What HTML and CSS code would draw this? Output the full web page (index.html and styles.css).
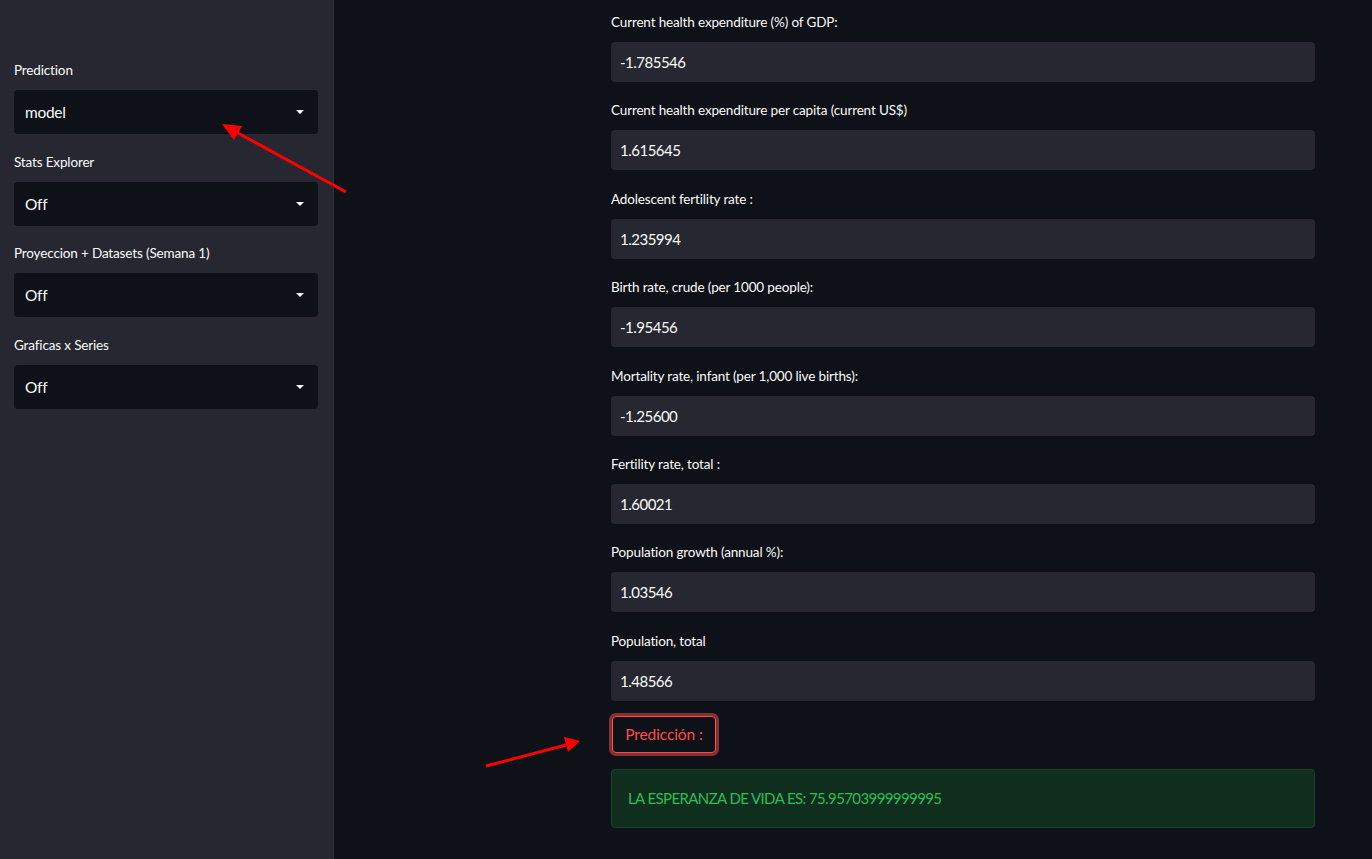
FILE: index.html
```html
<!DOCTYPE html>
<html lang="es">
<head>
<meta charset="utf-8">
<title>Prediction</title>
<link rel="stylesheet" href="styles.css">
</head>
<body>
<div class="app">
  <aside class="sidebar">
    <div class="group">
      <div class="slabel">Prediction</div>
      <div class="select"><span>model</span><span class="caret"></span></div>
    </div>
    <div class="group">
      <div class="slabel">Stats Explorer</div>
      <div class="select"><span>Off</span><span class="caret"></span></div>
    </div>
    <div class="group">
      <div class="slabel">Proyeccion + Datasets (Semana 1)</div>
      <div class="select"><span>Off</span><span class="caret"></span></div>
    </div>
    <div class="group">
      <div class="slabel">Graficas x Series</div>
      <div class="select"><span>Off</span><span class="caret"></span></div>
    </div>
  </aside>
  <main class="main">
    <div class="content">
      <div class="field"><div class="flabel">Current health expenditure (%) of GDP:</div><div class="input">-1.785546</div></div>
      <div class="field"><div class="flabel">Current health expenditure per capita (current US$)</div><div class="input">1.615645</div></div>
      <div class="field"><div class="flabel">Adolescent fertility rate :</div><div class="input">1.235994</div></div>
      <div class="field"><div class="flabel">Birth rate, crude (per 1000 people):</div><div class="input">-1.95456</div></div>
      <div class="field"><div class="flabel">Mortality rate, infant (per 1,000 live births):</div><div class="input">-1.25600</div></div>
      <div class="field"><div class="flabel">Fertility rate, total :</div><div class="input">1.60021</div></div>
      <div class="field"><div class="flabel">Population growth (annual %):</div><div class="input">1.03546</div></div>
      <div class="field"><div class="flabel">Population, total</div><div class="input">1.48566</div></div>
      <div class="btnrow"><button class="btn">Predicción :</button></div>
      <div class="success">LA ESPERANZA DE VIDA ES: 75.95703999999995</div>
    </div>
  </main>
</div>
<svg class="arrows" width="1372" height="859" viewBox="0 0 1372 859">
  <line x1="346" y1="192" x2="236" y2="132" stroke="#ff0000" stroke-width="3"/>
  <polygon points="222,124 242,126 234,140" fill="#ff0000"/>
  <line x1="486" y1="766" x2="566" y2="745" stroke="#ff0000" stroke-width="3"/>
  <polygon points="580,741 564,737 568,752" fill="#ff0000"/>
</svg>
</body>
</html>
```

FILE: styles.css
```css
html, body {
  margin: 0;
  padding: 0;
  background: #0e1117;
  font-family: "Source Sans Pro", Lato, "Noto Sans", sans-serif;
  color: #fafafa;
}
.app {
  display: flex;
  width: 1372px;
  height: 859px;
  overflow: hidden;
}
.sidebar {
  width: 334px;
  flex: none;
  box-sizing: border-box;
  background: #262730;
  border-right: 1px solid #2c2d36;
  padding: 60px 15px 0 14px;
  display: flex;
  flex-direction: column;
  gap: 17.7px;
}
.slabel {
  font-size: 13.5px;
  letter-spacing: -0.15px;
  line-height: 20px;
  margin-bottom: 10px;
}
.select {
  height: 44px;
  box-sizing: border-box;
  background: #0e1117;
  border-radius: 4px;
  display: flex;
  align-items: center;
  justify-content: space-between;
  padding: 0 14px 0 11px;
  font-size: 15.5px;
  letter-spacing: -0.3px;
}
.caret {
  width: 0;
  height: 0;
  border-left: 4px solid transparent;
  border-right: 4px solid transparent;
  border-top: 4px solid #fafafa;
}
.main {
  flex: 1;
  padding: 12px 0 0 277px;
  box-sizing: border-box;
}
.content {
  width: 704px;
  display: flex;
  flex-direction: column;
}
.field {
  margin-bottom: 18.4px;
}
.field:nth-child(8) {
  margin-bottom: 15px;
}
.flabel {
  font-size: 13.5px;
  letter-spacing: -0.15px;
  line-height: 20px;
  margin-bottom: 10px;
}
.input {
  height: 40px;
  box-sizing: border-box;
  background: #262730;
  border-radius: 4px;
  padding: 0 9px;
  display: flex;
  align-items: center;
  font-size: 15px;
  letter-spacing: -0.5px;
}
.btnrow {
  margin-bottom: 16px;
}
.btn {
  height: 37px;
  width: 104px;
  background: #0e1117;
  border: 1px solid #ff4b4b;
  border-radius: 4px;
  box-shadow: 0 0 0 3px rgba(255, 75, 75, 0.5);
  color: #ff4b4b;
  font-family: inherit;
  font-size: 15.5px;
  letter-spacing: -0.1px;
  padding: 0;
  margin-left: 1px;
}
.success {
  height: 59px;
  box-sizing: border-box;
  background: #0f2e1e;
  border: 1px solid #17432a;
  border-radius: 4px;
  padding: 0 16px;
  display: flex;
  align-items: center;
  color: #2bbf55;
  font-size: 15px;
  letter-spacing: -0.6px;
}
.arrows {
  position: absolute;
  left: 0;
  top: 0;
  pointer-events: none;
}
```
